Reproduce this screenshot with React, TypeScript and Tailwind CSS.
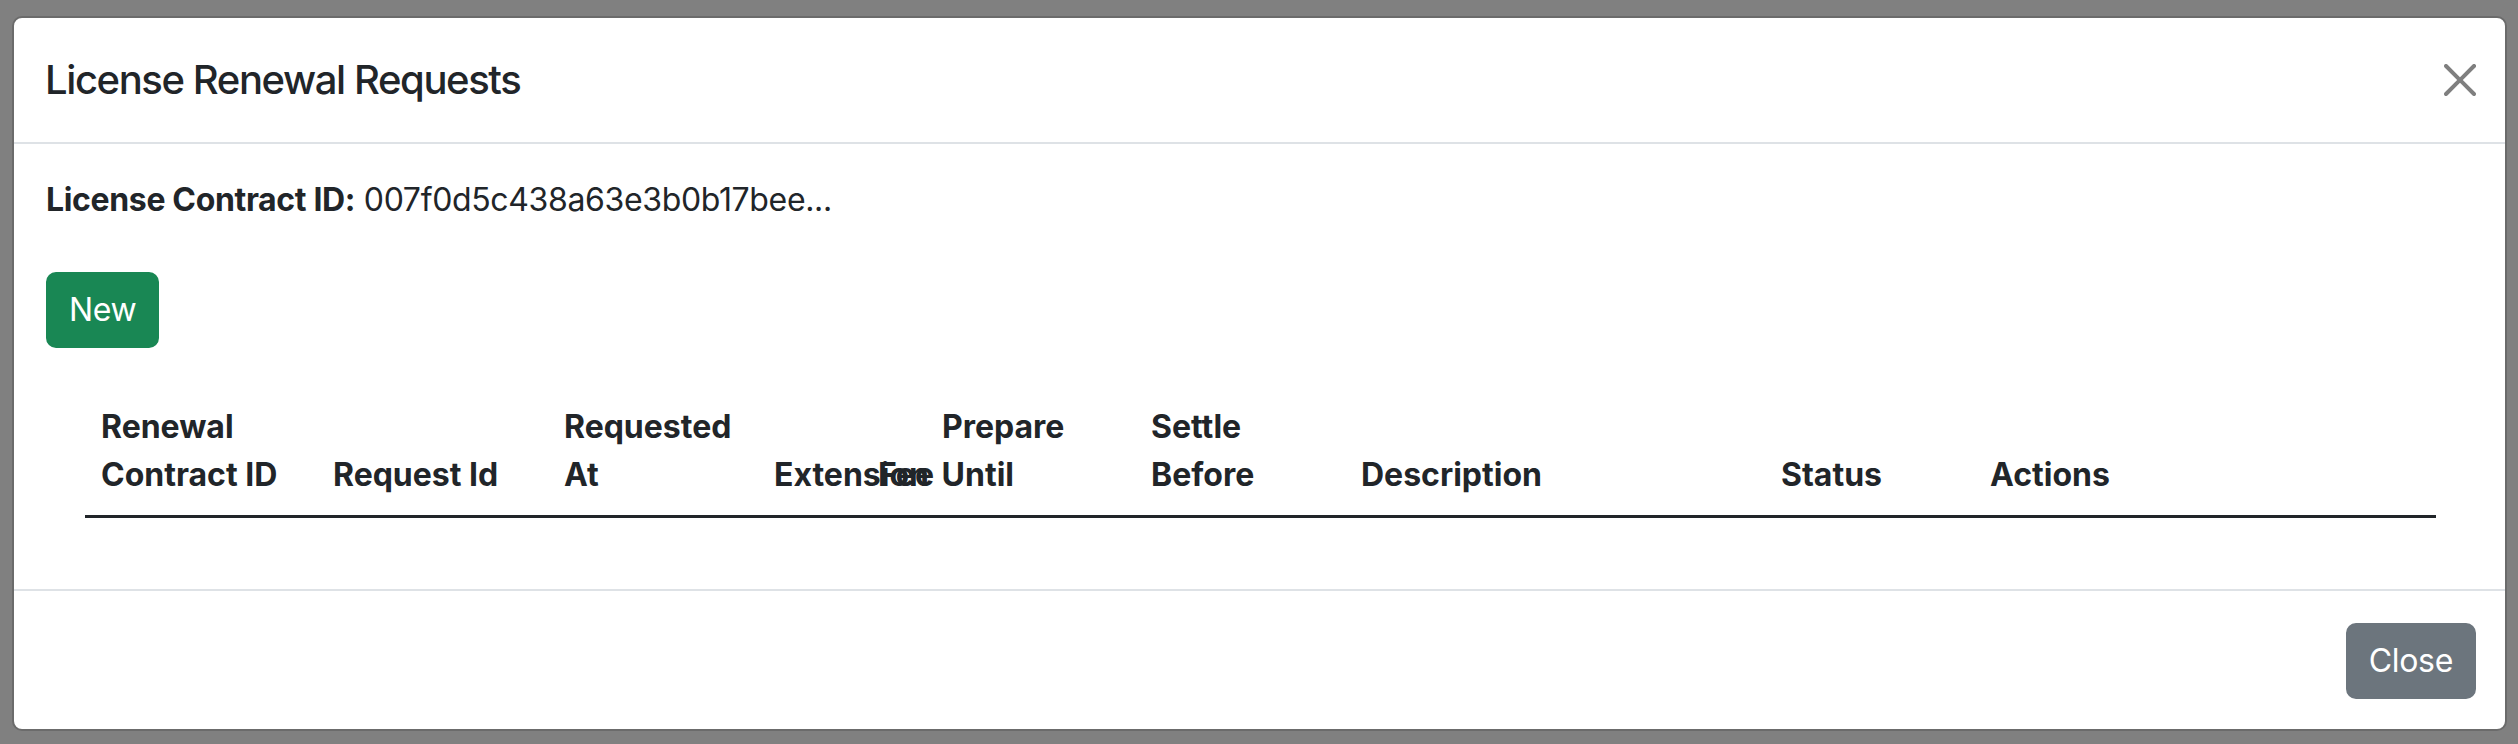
const columns = [
  { key: "renewal", width: 232 },
  { key: "request", width: 231 },
  { key: "requested", width: 210 },
  { key: "extension", width: 104 },
  { key: "prepare", width: 273 },
  { key: "settle", width: 210 },
  { key: "description", width: 420 },
  { key: "status", width: 209 },
  { key: "actions", width: 462 },
];

const CloseIcon = () => (
  <svg viewBox="0 0 16 16" className="h-[32px] w-[32px]" fill="#000" fillOpacity={0.5}>
    <path d="M.293.293a1 1 0 0 1 1.414 0L8 6.586 14.293.293a1 1 0 1 1 1.414 1.414L9.414 8l6.293 6.293a1 1 0 0 1-1.414 1.414L8 9.414l-6.293 6.293a1 1 0 0 1-1.414-1.414L6.586 8 .293 1.707a1 1 0 0 1 0-1.414z" />
  </svg>
);

export default function App() {
  return (
    <div
      className="h-[744px] w-[2518px] bg-[#808080] pl-[12px] pt-[16px] text-[#212529]"
      style={{ fontFamily: "Inter, 'Noto Sans', sans-serif" }}
    >
      <div className="flex w-[2495px] flex-col rounded-[10px] border-2 border-[#6b6b6b] bg-white">
        {/* header */}
        <div className="flex items-center justify-between border-b-2 border-[#dee2e6] py-[32px] pl-[31px] pr-[21px]">
          <h5 className="m-0 text-[40px] font-medium leading-[60px] tracking-[-1.4px]">
            License Renewal Requests
          </h5>
          <button type="button" className="flex h-[48px] w-[48px] items-center justify-center">
            <CloseIcon />
          </button>
        </div>

        {/* body */}
        <div className="p-[32px] text-[32px] leading-[48px]">
          <div className="mb-[48px] tracking-[-0.35px]">
            <span className="font-bold">License Contract ID:</span> 007f0d5c438a63e3b0b17bee...
          </div>
          <button
            type="button"
            className="mb-[39px] rounded-[10px] border-2 border-[#198754] bg-[#198754] px-[21px] py-[12px] text-[32px] leading-[48px] tracking-[-0.3px] text-white"
          >
            New
          </button>
          <div className="mb-[39px] pl-[39px] pr-[37px]">
            <table className="w-[2351px] table-fixed border-collapse text-left">
              <colgroup>
                {columns.map((c) => (
                  <col key={c.key} style={{ width: c.width }} />
                ))}
              </colgroup>
              <thead>
                <tr className="align-bottom">
                  <th className="border-b-[3px] border-[#212529] p-[16px] font-bold">
                    Renewal Contract ID
                  </th>
                  <th className="border-b-[3px] border-[#212529] p-[16px] font-bold">Request Id</th>
                  <th className="border-b-[3px] border-[#212529] p-[16px] font-bold">
                    Requested At
                  </th>
                  <th className="overflow-visible whitespace-nowrap border-b-[3px] border-[#212529] p-[16px] font-bold">
                    Extension
                  </th>
                  <th className="border-b-[3px] border-[#212529] p-[16px] font-bold">
                    <span className="block pl-[64px]">Prepare</span>
                    <span className="block">Fee Until</span>
                  </th>
                  <th className="border-b-[3px] border-[#212529] p-[16px] font-bold">
                    Settle Before
                  </th>
                  <th className="border-b-[3px] border-[#212529] p-[16px] font-bold">Description</th>
                  <th className="border-b-[3px] border-[#212529] p-[16px] font-bold">Status</th>
                  <th className="border-b-[3px] border-[#212529] p-[16px] font-bold">Actions</th>
                </tr>
              </thead>
              <tbody />
            </table>
          </div>
        </div>

        {/* footer */}
        <div className="flex justify-end border-t-2 border-[#dee2e6] px-[21px] pb-[22px] pt-[24px]">
          <button
            type="button"
            className="m-[8px] rounded-[10px] border-2 border-[#6c757d] bg-[#6c757d] px-[21px] py-[12px] text-[32px] leading-[48px] tracking-[-0.3px] text-white"
          >
            Close
          </button>
        </div>
      </div>
    </div>
  );
}
